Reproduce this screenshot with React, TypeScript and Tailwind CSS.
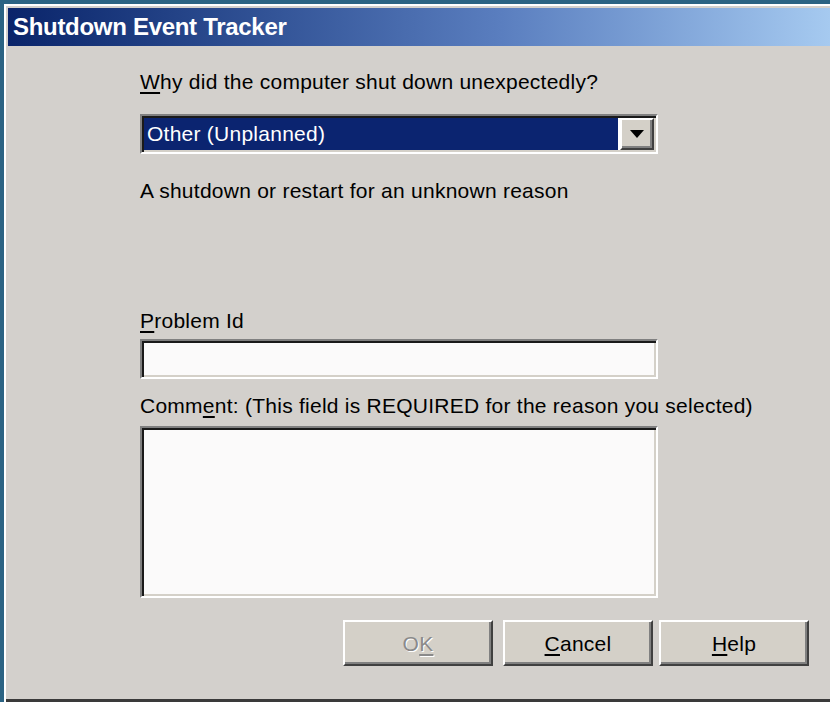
import React from "react";

const sunken =
  "border-2 border-t-[#808080] border-l-[#808080] border-r-white border-b-white shadow-[inset_2px_2px_0_#1a1a1a,inset_-2px_-2px_0_#d4d0c8]";
const raised =
  "border-2 border-t-white border-l-white border-r-[#404040] border-b-[#404040] shadow-[inset_-2px_-2px_0_#808080]";

function U({ children }: { children: React.ReactNode }) {
  return <span className="underline decoration-2 underline-offset-[3px]">{children}</span>;
}

function Btn({ children, disabled }: { children: React.ReactNode; disabled?: boolean }) {
  return (
    <div
      className={`${raised} w-[150px] h-[46px] bg-[#d4d0c8] flex items-center justify-center text-[21px] tracking-[0.25px] ${
        disabled ? "text-[#8a8a8a] [text-shadow:1px_1px_0_#ffffff]" : "text-black"
      }`}
    >
      {children}
    </div>
  );
}

export default function App() {
  return (
    <div
      className="w-[830px] h-[702px] bg-[#2b6383] pt-[4px] pl-[4px] overflow-hidden"
      style={{ fontFamily: '"Liberation Sans", Arial, sans-serif' }}
    >
      <div className="w-full h-full bg-[#d3d0cc] border-t-2 border-l-2 border-white flex flex-col">
        <div className="pt-[2px] pl-[2px]">
          <div className="h-[38px] bg-gradient-to-r from-[#0a246a] via-[#5a7ebf] via-60% to-[#a6caf0] flex items-center pl-[5px]">
            <span className="text-white font-bold text-[24px] tracking-[-0.3px]">Shutdown Event Tracker</span>
          </div>
        </div>
        <div className="flex-1 flex flex-col pl-[134px] border-b-[3px] border-[#3a3a3a] text-[21px] tracking-[0.25px] leading-[25px] text-black">
          <div className="mt-[23px]">
            <U>W</U>hy did the computer shut down unexpectedly?
          </div>
          <div className={`${sunken} mt-[20px] w-[518px] h-[40px] bg-white flex p-[2px] tracking-normal`}>
            <div className="flex-1 bg-[#0b2470] text-white text-[21px] tracking-[0.25px] leading-[32px] pl-[3px] mr-[2px]">
              Other (Unplanned)
            </div>
            <div className={`${raised} w-[34px] bg-[#d4d0c8] flex items-center justify-center`}>
              <svg width="14" height="8" viewBox="0 0 14 8">
                <polygon points="0,0 14,0 7,8" fill="#000" />
              </svg>
            </div>
          </div>
          <div className="mt-[24px]">A shutdown or restart for an unknown reason</div>
          <div className="mt-[105px]">
            <U>P</U>roblem Id
          </div>
          <div className={`${sunken} mt-[6px] w-[518px] h-[40px] bg-[#fbfafa]`} />
          <div className="mt-[14px]">
            Comm<U>e</U>nt: (This field is REQUIRED for the reason you selected)
          </div>
          <div className={`${sunken} mt-[8px] w-[518px] h-[172px] bg-[#fbfafa]`} />
          <div className="mt-[22px] flex gap-[10px] pl-[203px]">
            <Btn disabled>
              O<U>K</U>
            </Btn>
            <Btn>
              <U>C</U>ancel
            </Btn>
            <div className="-ml-[4px]">
              <Btn>
                <U>H</U>elp
              </Btn>
            </div>
          </div>
        </div>
      </div>
    </div>
  );
}
